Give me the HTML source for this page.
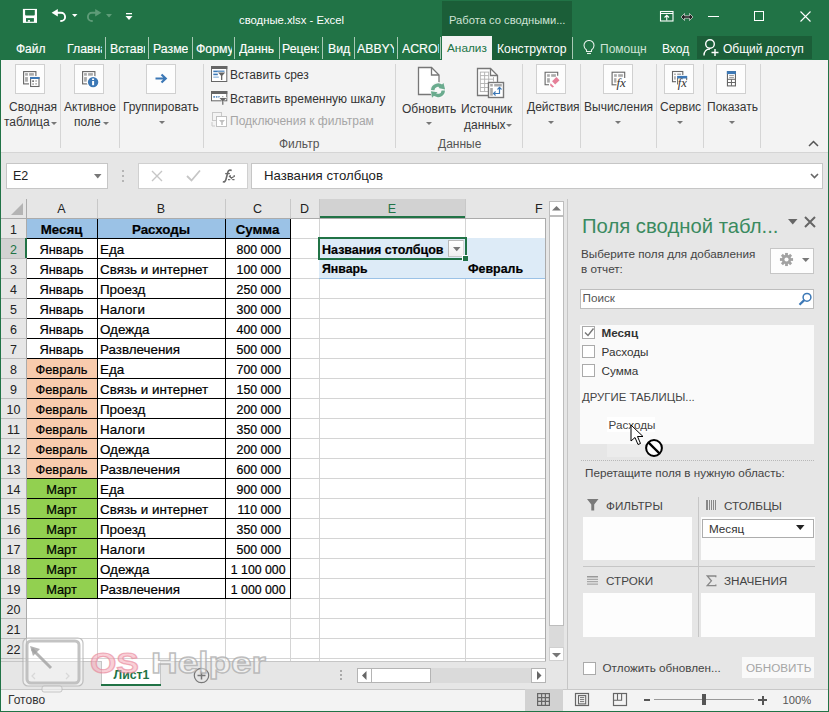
<!DOCTYPE html>
<html><head><meta charset="utf-8">
<style>
*{margin:0;padding:0;box-sizing:border-box}
html,body{width:829px;height:712px;overflow:hidden;background:#e6e6e6;font-family:"Liberation Sans",sans-serif;position:relative}
.a{position:absolute}
.t{position:absolute;white-space:nowrap;line-height:1}
#title{left:0;top:0;width:829px;height:60px;background:#217346}
#ribbon{left:0;top:60px;width:829px;height:93px;background:#f3f3f3;border-bottom:1px solid #d5d5d5}
#fbar{left:0;top:153px;width:829px;height:47px;background:#e6e6e6}
#pane{left:567px;top:199px;width:261px;height:490px;background:#e6e6e6;border-left:1px solid #c6c6c6}
#tabs{left:1px;top:661px;width:566px;height:28px;background:#e6e6e6}
#status{left:0;top:689px;width:829px;height:23px;background:#f3f3f3}
.sep{position:absolute;width:1px;background:#d5d5d5}
.bx{position:absolute;width:30px;height:30px;background:#fdfdfd;border:1px solid #d0d0d0}
.rt{position:absolute;white-space:nowrap;line-height:1;font-size:12px;color:#363636}
.dd{position:absolute;width:0;height:0;border-left:3px solid transparent;border-right:3px solid transparent;border-top:3px solid #777}
</style></head><body>
<div id="title" class="a"></div>
<div id="ribbon" class="a"></div>
<div id="fbar" class="a"></div>
<div id="pane" class="a"></div>
<div id="tabs" class="a"></div>
<div id="status" class="a"></div>
<!-- TITLE BAR -->
<div class="a" style="left:442px;top:1px;width:130px;height:59px;background:#1b5e38"></div>
<svg class="a" style="left:22px;top:8px" width="16" height="16" viewBox="0 0 16 16"><rect x="0.9" y="0.9" width="14.1" height="14" fill="#fff"/><path d="M3.1 2.1h9.7v4.5a1 1 0 0 1-1 1H4.1a1 1 0 0 1-1-1z" fill="#217346"/><rect x="4" y="10.1" width="7.9" height="3.6" fill="#217346"/><rect x="5.9" y="12.1" width="2.1" height="1.6" fill="#fff"/></svg>
<svg class="a" style="left:50px;top:7px" width="18" height="17" viewBox="0 0 18 17"><path d="M1.6 5.8L7.8 2.1v7.4z" fill="#fff"/><path d="M6 5.8H11a4.1 4.1 0 0 1 0 8.2H10.3" fill="none" stroke="#fff" stroke-width="1.9"/></svg>
<svg class="a" style="left:72px;top:14px" width="6" height="4"><path d="M0 0h5.5l-2.75 3z" fill="#fff"/></svg>
<svg class="a" style="left:85px;top:7px" width="18" height="17" viewBox="0 0 18 17"><path d="M16.4 5.8L10.2 2.1v7.4z" fill="#5e9c78"/><path d="M12 5.8H7a4.1 4.1 0 0 0 0 8.2H7.7" fill="none" stroke="#5e9c78" stroke-width="1.9"/></svg>
<svg class="a" style="left:106px;top:14px" width="6" height="4"><path d="M0 0h6l-3 3.5z" fill="#5e9c78"/></svg>
<svg class="a" style="left:125px;top:13px" width="8" height="8"><rect x="1" y="0" width="6" height="1.3" fill="#fff"/><path d="M0.5 3h7l-3.5 4z" fill="#fff"/></svg>
<div class="t" style="left:239px;top:14.5px;font-size:11.3px;color:#fff">сводные.xlsx - Excel</div>
<div class="t" style="left:449px;top:15px;font-size:11.2px;color:#cfe3d6">Работа со сводными...</div>
<svg class="a" style="left:659px;top:10px" width="15" height="12" viewBox="0 0 15 12"><rect x="1.5" y="1.5" width="12.5" height="9.5" fill="none" stroke="#fff" stroke-width="1.1"/><line x1="1.5" y1="3.5" x2="14" y2="3.5" stroke="#fff" stroke-width="1"/><path d="M7.75 10.5V5.5M5.5 7.5l2.25-2.2 2.25 2.2" fill="none" stroke="#fff" stroke-width="1.1"/></svg>
<svg class="a" style="left:680px;top:12px" width="14" height="10" viewBox="0 0 14 10"><path d="M1 5l3.5-3.5v2.3h5V1.5L13 5l-3.5 3.5V6.2h-5v2.3z" fill="#222" stroke="#fff" stroke-width="0.6"/></svg>
<div class="a" style="left:708px;top:16px;width:11px;height:1px;background:#fff"></div>
<div class="a" style="left:754px;top:11px;width:10px;height:10px;border:1px solid #fff"></div>
<svg class="a" style="left:800px;top:11px" width="11" height="11" viewBox="0 0 11 11"><path d="M0.5 0.5l10 10M10.5 0.5l-10 10" stroke="#fff" stroke-width="1.1"/></svg>
<!-- TABS ROW -->
<div class="t" style="left:16px;top:43px;font-size:12px;color:#fff;-webkit-text-stroke:0.15px #fff">Файл</div>
<div class="a" style="left:0;top:37px;width:442px;height:23px;overflow:hidden">
<div class="a" style="left:67px;top:6px;width:35px;height:14px;overflow:hidden"><div class="t" style="left:0;top:0;font-size:12.3px;color:#fff;-webkit-text-stroke:0.15px #fff">Главная</div></div>
<div class="a" style="left:105px;top:-1px;width:1px;height:23px;background:#a8c9b5"></div>
<div class="a" style="left:110px;top:6px;width:35px;height:14px;overflow:hidden"><div class="t" style="left:0;top:0;font-size:12.3px;color:#fff;-webkit-text-stroke:0.15px #fff">Вставка</div></div>
<div class="a" style="left:148px;top:-1px;width:1px;height:23px;background:#a8c9b5"></div>
<div class="a" style="left:153px;top:6px;width:35px;height:14px;overflow:hidden"><div class="t" style="left:0;top:0;font-size:12.3px;color:#fff;-webkit-text-stroke:0.15px #fff">Разметка</div></div>
<div class="a" style="left:192px;top:-1px;width:1px;height:23px;background:#a8c9b5"></div>
<div class="a" style="left:196px;top:6px;width:36px;height:14px;overflow:hidden"><div class="t" style="left:0;top:0;font-size:12.3px;color:#fff;-webkit-text-stroke:0.15px #fff">Формулы</div></div>
<div class="a" style="left:234px;top:-1px;width:1px;height:23px;background:#a8c9b5"></div>
<div class="a" style="left:239px;top:6px;width:35px;height:14px;overflow:hidden"><div class="t" style="left:0;top:0;font-size:12.3px;color:#fff;-webkit-text-stroke:0.15px #fff">Данные</div></div>
<div class="a" style="left:279px;top:-1px;width:1px;height:23px;background:#a8c9b5"></div>
<div class="a" style="left:282px;top:6px;width:37px;height:14px;overflow:hidden"><div class="t" style="left:0;top:0;font-size:12.3px;color:#fff;-webkit-text-stroke:0.15px #fff">Рецензирование</div></div>
<div class="a" style="left:322px;top:-1px;width:1px;height:23px;background:#a8c9b5"></div>
<div class="t" style="left:328px;top:6px;font-size:12.3px;color:#fff;-webkit-text-stroke:0.15px #fff">Вид</div>
<div class="a" style="left:354px;top:-1px;width:1px;height:23px;background:#a8c9b5"></div>
<div class="a" style="left:357px;top:6px;width:37px;height:14px;overflow:hidden"><div class="t" style="left:0;top:0;font-size:12.3px;color:#fff;-webkit-text-stroke:0.15px #fff">ABBYY FineReader</div></div>
<div class="a" style="left:397px;top:-1px;width:1px;height:23px;background:#a8c9b5"></div>
<div class="a" style="left:402px;top:6px;width:37px;height:14px;overflow:hidden"><div class="t" style="left:0;top:0;font-size:12.3px;color:#fff;-webkit-text-stroke:0.15px #fff">ACROBAT</div></div>
<div class="a" style="left:440px;top:-1px;width:1px;height:23px;background:#a8c9b5"></div>
</div>
<div class="a" style="left:442px;top:36px;width:50px;height:24px;background:#f3f3f3"></div>
<div class="t" style="left:447px;top:43px;font-size:11.8px;color:#217346">Анализ</div>
<div class="t" style="left:497px;top:43px;font-size:12.2px;color:#fff">Конструктор</div>
<div class="a" style="left:572px;top:37px;width:1px;height:22px;background:#a8c9b5"></div>
<svg class="a" style="left:583px;top:40px" width="12" height="16" viewBox="0 0 12 16"><path d="M3.5 11.5V10C1.5 8.5 1 7 1 5.5a5 5 0 0 1 10 0c0 1.5-.5 3-2.5 4.5v1.5z" fill="none" stroke="#e6f0ea" stroke-width="1.1"/><path d="M4 13.5h4" stroke="#e6f0ea" stroke-width="1.1"/></svg>
<div class="a" style="left:600px;top:43px;width:47px;height:14px;overflow:hidden"><div class="t" style="left:0;top:0;font-size:12px;color:#cfe3d6">Помощник</div></div>
<div class="t" style="left:662px;top:43px;font-size:12px;color:#fff">Вход</div>
<div class="a" style="left:697px;top:36px;width:115px;height:23px;background:#1b5e38"></div>
<svg class="a" style="left:703px;top:38px" width="17" height="19" viewBox="0 0 17 19"><circle cx="7" cy="6" r="4.3" fill="none" stroke="#fff" stroke-width="1.4"/><path d="M1 17.5c0-4 2.5-6.5 6-6.5" fill="none" stroke="#fff" stroke-width="1.4"/><path d="M12 11v7M8.5 14.5h7" stroke="#fff" stroke-width="1.4"/></svg>
<div class="t" style="left:723px;top:43px;font-size:12px;color:#fff">Общий доступ</div>
<!-- RIBBON -->
<div class="sep" style="left:60px;top:64px;height:84px"></div>
<div class="sep" style="left:119px;top:64px;height:84px"></div>
<div class="sep" style="left:203px;top:64px;height:84px"></div>
<div class="sep" style="left:395px;top:64px;height:84px"></div>
<div class="sep" style="left:522px;top:64px;height:84px"></div>
<div class="sep" style="left:580px;top:64px;height:84px"></div>
<div class="sep" style="left:656px;top:64px;height:84px"></div>
<div class="sep" style="left:703px;top:64px;height:84px"></div>
<div class="sep" style="left:760px;top:64px;height:84px"></div>
<!-- Сводная таблица -->
<div class="bx" style="left:15px;top:64px"></div>
<svg class="a" style="left:18px;top:66px" width="26" height="26" viewBox="0 0 26 26"><rect x="5.6" y="5.6" width="12.3" height="12.3" fill="none" stroke="#666" stroke-width="1.1"/><rect x="7.1" y="7.1" width="2.8" height="2.6" fill="#aaa"/><rect x="11.1" y="7.1" width="4.8" height="2.6" fill="#aaa"/><rect x="7.1" y="11.1" width="2.8" height="4.6" fill="#aaa"/><rect x="11" y="10" width="11" height="12" fill="#fff"/><rect x="12.6" y="11.5" width="8.4" height="9" fill="#fff" stroke="#666" stroke-width="1.1"/><rect x="12" y="11" width="9.5" height="2" fill="#3c78b6"/><rect x="14.2" y="14.3" width="1.8" height="1.7" fill="#777"/><rect x="17.2" y="14.6" width="1.8" height="0.8" fill="#777"/><rect x="14.2" y="17.2" width="1.8" height="1.8" fill="#bbb"/><rect x="17.2" y="17.5" width="1.8" height="0.8" fill="#777"/></svg>
<div class="rt" style="left:9px;top:101px">Сводная</div>
<div class="rt" style="left:4px;top:116px">таблица</div>
<div class="dd" style="left:51px;top:122px"></div>
<!-- Активное поле -->
<div class="bx" style="left:74px;top:64px"></div>
<svg class="a" style="left:77px;top:66px" width="26" height="26" viewBox="0 0 26 26"><rect x="5.6" y="5.6" width="12.3" height="12.3" fill="none" stroke="#666" stroke-width="1.1"/><rect x="7.1" y="7.1" width="2.8" height="2.6" fill="#aaa"/><rect x="11.1" y="7.1" width="4.8" height="2.6" fill="#aaa"/><rect x="7.1" y="11.1" width="2.8" height="4.6" fill="#aaa"/><circle cx="16.1" cy="16.1" r="6.4" fill="#fff"/><circle cx="16.1" cy="16.1" r="5.2" fill="#3c78b6"/><rect x="15.1" y="12.5" width="2" height="1.5" fill="#fff"/><rect x="15.1" y="15" width="2" height="4.2" fill="#fff"/></svg>
<div class="rt" style="left:64px;top:101px">Активное</div>
<div class="rt" style="left:74px;top:116px">поле</div>
<div class="dd" style="left:103px;top:122px"></div>
<!-- Группировать -->
<div class="bx" style="left:146px;top:64px"></div>
<svg class="a" style="left:155px;top:73px" width="13" height="11" viewBox="0 0 13 11"><path d="M0.5 5.5h10M6.5 1.5l4.2 4-4.2 4" fill="none" stroke="#3c78b6" stroke-width="2.2"/></svg>
<div class="rt" style="left:123px;top:101px">Группировать</div>
<div class="dd" style="left:159px;top:121px"></div>
<!-- Фильтр -->
<svg class="a" style="left:211px;top:66px" width="17" height="16" viewBox="0 0 17 16"><rect x="0.5" y="0.5" width="15.3" height="15" fill="#fff" stroke="#666"/><rect x="0" y="0" width="16.3" height="3" fill="#666"/><rect x="2.3" y="4.6" width="11.2" height="1.6" fill="#3c78b6"/><rect x="2.3" y="7.6" width="4.5" height="1.6" fill="#3c78b6"/><rect x="2.3" y="10.4" width="5.5" height="1.6" fill="#a9c6e2"/><path d="M6.2 5.8H15L11.9 9.4V14.5H9.3V9.4z" fill="#fff"/><path d="M7 6.6H14.2L11.3 9.8V14H10V9.8z" fill="#666"/></svg>
<div class="rt" style="left:230px;top:69px;color:#333">Вставить срез</div>
<svg class="a" style="left:211px;top:91px" width="17" height="15" viewBox="0 0 17 15"><rect x="0.5" y="0.5" width="15.3" height="9.3" fill="#fff" stroke="#666"/><rect x="0" y="0" width="16.3" height="3" fill="#666"/><rect x="2.3" y="5.2" width="1.8" height="1.4" fill="#3c78b6"/><rect x="5" y="5.2" width="1.4" height="1.4" fill="#3c78b6"/><rect x="7.3" y="5.2" width="1.4" height="1.4" fill="#3c78b6"/><rect x="11" y="5.2" width="1.4" height="1.4" fill="#999"/><path d="M7.6 6.2H16.3L12.9 9.6V14.3H10.7V9.6z" fill="#f3f3f3"/><path d="M8.5 7H15.5L12.4 10V13.7H11.2V10z" fill="#666"/></svg>
<div class="rt" style="left:230px;top:92.5px;color:#333">Вставить временную шкалу</div>
<svg class="a" style="left:211px;top:112px" width="17" height="16" viewBox="0 0 17 16"><rect x="1.5" y="0.5" width="9" height="8" fill="none" stroke="#c8c8c8"/><rect x="5.5" y="4.5" width="10" height="10" fill="#fff" stroke="#c0c0c0"/><path d="M8 8h6l-2.2 2.5v2.5h-1.6v-2.5z" fill="#c0c0c0"/><path d="M1 10v4h3" fill="none" stroke="#c8c8c8"/></svg>
<div class="rt" style="left:230px;top:115px;color:#a6a6a6">Подключения к фильтрам</div>
<div class="rt" style="left:279px;top:138px;color:#555">Фильтр</div>
<!-- Данные -->
<svg class="a" style="left:417px;top:66px" width="30" height="32" viewBox="0 0 30 32"><path d="M1.5 1.5h13l7.5 7.5v19.5h-20.5z" fill="#fff" stroke="#777" stroke-width="1.3"/><path d="M14.5 1.5v7.5h7.5" fill="none" stroke="#777" stroke-width="1.3"/><circle cx="21" cy="24.3" r="8.3" fill="#f7f7f7"/><path d="M15.7 24.1A5.3 5.3 0 0 1 25.3 21.3" fill="none" stroke="#6aab8e" stroke-width="3.4"/><path d="M26.5 17l1.6 6.6-6.6-1.5z" fill="#6aab8e"/><path d="M26.3 24.5A5.3 5.3 0 0 1 16.7 27.3" fill="none" stroke="#6aab8e" stroke-width="3.4"/><path d="M14 25.3l6.5 1-5.5 5.4z" fill="#6aab8e"/></svg>
<svg class="a" style="left:476px;top:67px" width="30" height="32" viewBox="0 0 30 32"><path d="M1.5 1.5h13l7 7v20h-20z" fill="#fff" stroke="#777" stroke-width="1.3"/><path d="M14.5 1.5v7h7" fill="none" stroke="#777" stroke-width="1.3"/><g fill="none" stroke="#b0b0b0" stroke-width="0.9"><rect x="4.3" y="5.1" width="8.4" height="19.5"/><path d="M8.6 5.1v19.5M4.3 8.6h8.4M4.3 12.2h13.4M4.3 16.5h8.4M4.3 20.5h8.4M17.5 10v4.5"/></g><rect x="12.5" y="15.5" width="15" height="15" fill="#fff" stroke="#777" stroke-width="1.4"/><rect x="14.2" y="17" width="2.6" height="2.5" fill="#aaa"/><rect x="18.2" y="17" width="7.6" height="2.5" fill="#aaa"/><rect x="14.2" y="21" width="2.6" height="7.7" fill="#aaa"/><path d="M17.8 26.5H23.5V20.8" fill="none" stroke="#3c78b6" stroke-width="1.2"/><path d="M19.6 24.5L17.5 26.5 19.6 28.5M21.5 22.5L23.5 20.4 25.5 22.5" fill="none" stroke="#3c78b6" stroke-width="1.1"/></svg>
<div class="rt" style="left:402px;top:103px">Обновить</div>
<div class="dd" style="left:426px;top:122px"></div>
<div class="rt" style="left:461px;top:103px">Источник</div>
<div class="rt" style="left:464px;top:119px">данных</div>
<div class="dd" style="left:506px;top:124px"></div>
<div class="rt" style="left:438px;top:138px;color:#555">Данные</div>
<!-- Действия -->
<div class="bx" style="left:536px;top:64px"></div>
<svg class="a" style="left:538px;top:66px" width="26" height="26" viewBox="0 0 26 26"><path d="M19.7 9.7V6.2H7.1V18.8H11" fill="none" stroke="#666" stroke-width="1.1"/><rect x="9.1" y="8.2" width="2.7" height="2.6" fill="#aaa"/><rect x="13.2" y="8.2" width="4.7" height="2.6" fill="#aaa"/><rect x="9.1" y="12.2" width="2.7" height="4.4" fill="#aaa"/><path d="M18.4 11.1L21.5 14.2 17.2 18.6 14.1 15.3z" fill="#e57f98"/><path d="M12.6 17.2L16.1 20.8 14.4 21.6 12 19.2z" fill="#e57f98"/></svg>
<div class="rt" style="left:527px;top:101px">Действия</div>
<div class="dd" style="left:548px;top:121px"></div>
<!-- Вычисления -->
<div class="bx" style="left:603px;top:64px"></div>
<svg class="a" style="left:605px;top:66px" width="26" height="26" viewBox="0 0 26 26"><rect x="7.1" y="6.2" width="12.6" height="12.6" fill="none" stroke="#666" stroke-width="1.1"/><rect x="9.1" y="8.2" width="2.7" height="2.6" fill="#aaa"/><rect x="13.2" y="8.2" width="4.7" height="2.6" fill="#aaa"/><rect x="9.1" y="12.2" width="2.7" height="4.4" fill="#aaa"/><rect x="11.5" y="12" width="12" height="11" fill="#fff"/><text x="11.5" y="20.5" font-family="Liberation Serif" font-style="italic" font-size="13" fill="#333">fx</text></svg>
<div class="rt" style="left:584px;top:101px">Вычисления</div>
<div class="dd" style="left:615px;top:121px"></div>
<!-- Сервис -->
<div class="bx" style="left:664px;top:64px"></div>
<svg class="a" style="left:666px;top:66px" width="26" height="26" viewBox="0 0 26 26"><rect x="6.5" y="5.5" width="10.3" height="10.2" fill="none" stroke="#666" stroke-width="1.1"/><rect x="8.1" y="7.5" width="1.7" height="1.5" fill="#aaa"/><rect x="11.2" y="7.5" width="3.9" height="1.5" fill="#aaa"/><rect x="8.1" y="10.2" width="1.7" height="3.4" fill="#aaa"/><rect x="10" y="9" width="12.5" height="13.5" fill="#fff"/><rect x="11.1" y="9.9" width="10.1" height="2.6" fill="#3c78b6"/><path d="M11.6 12v6.5M20.7 12v2.2" stroke="#666" stroke-width="1"/><text x="11.8" y="20.8" font-family="Liberation Serif" font-style="italic" font-size="12.5" fill="#333">fx</text></svg>
<div class="rt" style="left:660px;top:101px">Сервис</div>
<div class="dd" style="left:677px;top:121px"></div>
<!-- Показать -->
<div class="bx" style="left:716px;top:64px"></div>
<svg class="a" style="left:718px;top:66px" width="26" height="26" viewBox="0 0 26 26"><rect x="9.45" y="5.6" width="8" height="14.3" fill="#fff" stroke="#666" stroke-width="1.1"/><rect x="8.9" y="5.1" width="9" height="3" fill="#3c78b6"/><rect x="11.2" y="9.2" width="4.7" height="0.9" fill="#888"/><rect x="11.2" y="11.2" width="4.7" height="0.9" fill="#888"/><path d="M9.5 13.3h8M9.5 16.5h8M13.45 13.3v6.6" stroke="#666" stroke-width="1"/></svg>
<div class="rt" style="left:707px;top:101px">Показать</div>
<div class="dd" style="left:729px;top:121px"></div>
<svg class="a" style="left:808px;top:140px" width="11" height="7" viewBox="0 0 11 7"><path d="M1 6l4.5-4.5L10 6" fill="none" stroke="#555" stroke-width="1.5"/></svg>
<!-- FORMULA BAR -->
<div class="a" style="left:6px;top:163px;width:102px;height:26px;background:#fff;border:1px solid #c6c6c6"></div>
<div class="t" style="left:13px;top:170px;font-size:12.5px;color:#222">E2</div>
<svg class="a" style="left:94px;top:174px" width="8" height="5"><path d="M0 0h7.5L3.75 4.5z" fill="#777"/></svg>
<div class="a" style="left:122px;top:170px;width:2px;height:2px;background:#b5b5b5"></div>
<div class="a" style="left:122px;top:175px;width:2px;height:2px;background:#b5b5b5"></div>
<div class="a" style="left:122px;top:180px;width:2px;height:2px;background:#b5b5b5"></div>
<div class="a" style="left:138px;top:163px;width:110px;height:26px;background:#fff;border:1px solid #d0d0d0"></div>
<svg class="a" style="left:151px;top:170px" width="12" height="12" viewBox="0 0 12 12"><path d="M1 1l10 10M11 1L1 11" stroke="#c6c6c6" stroke-width="1.4"/></svg>
<svg class="a" style="left:186px;top:169px" width="15" height="13" viewBox="0 0 15 13"><path d="M1 7l4.5 4.5L14 1.5" fill="none" stroke="#c6c6c6" stroke-width="1.8"/></svg>
<svg class="a" style="left:221px;top:168px" width="16" height="16" viewBox="0 0 16 16"><path d="M1.8 13.6C3.3 14.3 4.5 13.4 5 11.3L6.9 4C7.5 2.2 8.8 1.7 10.7 2.5" fill="none" stroke="#6a6a6a" stroke-width="1.6"/><path d="M4.2 5.6H8.9" stroke="#6a6a6a" stroke-width="1.3"/><path d="M8 8l4.3 3.7M13.8 7.9L7.6 11.8M7 11.7h2M11.5 11.7h2M8.5 7.9h1.5M12.5 7.9h1.5" fill="none" stroke="#6a6a6a" stroke-width="1.2"/></svg>
<div class="a" style="left:251px;top:163px;width:572px;height:26px;background:#fff;border:1px solid #c6c6c6"></div>
<div class="t" style="left:264px;top:169px;font-size:13.2px;color:#222">Названия столбцов</div>
<svg class="a" style="left:810px;top:173px" width="9" height="6" viewBox="0 0 9 6"><path d="M1 1l3.5 3.5L8 1" fill="none" stroke="#666" stroke-width="1.6"/></svg>
<!-- GRID -->
<div class="a" style="left:1px;top:199px;width:566px;height:19px;background:#e6e6e6"></div>
<div class="a" style="left:26px;top:218px;width:519px;height:443px;background:#fff"></div>
<div class="a" style="left:1px;top:218px;width:25px;height:443px;background:#e6e6e6"></div>
<div class="a" style="left:1px;top:238px;width:25px;height:20px;background:#d2d2d2"></div>
<div class="a" style="left:319px;top:199px;width:146px;height:19px;background:#d2d2d2"></div>
<div class="a" style="left:319px;top:216px;width:146px;height:2px;background:#217346"></div>
<div class="a" style="left:97px;top:199px;width:1px;height:19px;background:#c8c8c8"></div>
<div class="a" style="left:225px;top:199px;width:1px;height:19px;background:#c8c8c8"></div>
<div class="a" style="left:290px;top:199px;width:1px;height:19px;background:#c8c8c8"></div>
<div class="a" style="left:319px;top:199px;width:1px;height:19px;background:#c8c8c8"></div>
<div class="a" style="left:465px;top:199px;width:1px;height:19px;background:#c8c8c8"></div>
<div class="a" style="left:26px;top:199px;width:1px;height:19px;background:#c8c8c8"></div>
<div class="a" style="left:1px;top:218px;width:545px;height:1px;background:#ababab"></div>
<div class="a" style="left:26px;top:199px;width:1px;height:462px;background:#ababab"></div>
<div class="a" style="left:545px;top:218px;width:1px;height:443px;background:#ababab"></div>
<div class="a" style="left:27px;top:238px;width:518px;height:1px;background:#d4d4d4"></div>
<div class="a" style="left:1px;top:238px;width:25px;height:1px;background:#bdbdbd"></div>
<div class="a" style="left:27px;top:258px;width:518px;height:1px;background:#d4d4d4"></div>
<div class="a" style="left:1px;top:258px;width:25px;height:1px;background:#bdbdbd"></div>
<div class="a" style="left:27px;top:278px;width:518px;height:1px;background:#d4d4d4"></div>
<div class="a" style="left:1px;top:278px;width:25px;height:1px;background:#bdbdbd"></div>
<div class="a" style="left:27px;top:298px;width:518px;height:1px;background:#d4d4d4"></div>
<div class="a" style="left:1px;top:298px;width:25px;height:1px;background:#bdbdbd"></div>
<div class="a" style="left:27px;top:318px;width:518px;height:1px;background:#d4d4d4"></div>
<div class="a" style="left:1px;top:318px;width:25px;height:1px;background:#bdbdbd"></div>
<div class="a" style="left:27px;top:338px;width:518px;height:1px;background:#d4d4d4"></div>
<div class="a" style="left:1px;top:338px;width:25px;height:1px;background:#bdbdbd"></div>
<div class="a" style="left:27px;top:358px;width:518px;height:1px;background:#d4d4d4"></div>
<div class="a" style="left:1px;top:358px;width:25px;height:1px;background:#bdbdbd"></div>
<div class="a" style="left:27px;top:378px;width:518px;height:1px;background:#d4d4d4"></div>
<div class="a" style="left:1px;top:378px;width:25px;height:1px;background:#bdbdbd"></div>
<div class="a" style="left:27px;top:398px;width:518px;height:1px;background:#d4d4d4"></div>
<div class="a" style="left:1px;top:398px;width:25px;height:1px;background:#bdbdbd"></div>
<div class="a" style="left:27px;top:418px;width:518px;height:1px;background:#d4d4d4"></div>
<div class="a" style="left:1px;top:418px;width:25px;height:1px;background:#bdbdbd"></div>
<div class="a" style="left:27px;top:438px;width:518px;height:1px;background:#d4d4d4"></div>
<div class="a" style="left:1px;top:438px;width:25px;height:1px;background:#bdbdbd"></div>
<div class="a" style="left:27px;top:458px;width:518px;height:1px;background:#d4d4d4"></div>
<div class="a" style="left:1px;top:458px;width:25px;height:1px;background:#bdbdbd"></div>
<div class="a" style="left:27px;top:478px;width:518px;height:1px;background:#d4d4d4"></div>
<div class="a" style="left:1px;top:478px;width:25px;height:1px;background:#bdbdbd"></div>
<div class="a" style="left:27px;top:498px;width:518px;height:1px;background:#d4d4d4"></div>
<div class="a" style="left:1px;top:498px;width:25px;height:1px;background:#bdbdbd"></div>
<div class="a" style="left:27px;top:518px;width:518px;height:1px;background:#d4d4d4"></div>
<div class="a" style="left:1px;top:518px;width:25px;height:1px;background:#bdbdbd"></div>
<div class="a" style="left:27px;top:538px;width:518px;height:1px;background:#d4d4d4"></div>
<div class="a" style="left:1px;top:538px;width:25px;height:1px;background:#bdbdbd"></div>
<div class="a" style="left:27px;top:558px;width:518px;height:1px;background:#d4d4d4"></div>
<div class="a" style="left:1px;top:558px;width:25px;height:1px;background:#bdbdbd"></div>
<div class="a" style="left:27px;top:578px;width:518px;height:1px;background:#d4d4d4"></div>
<div class="a" style="left:1px;top:578px;width:25px;height:1px;background:#bdbdbd"></div>
<div class="a" style="left:27px;top:598px;width:518px;height:1px;background:#d4d4d4"></div>
<div class="a" style="left:1px;top:598px;width:25px;height:1px;background:#bdbdbd"></div>
<div class="a" style="left:27px;top:618px;width:518px;height:1px;background:#d4d4d4"></div>
<div class="a" style="left:1px;top:618px;width:25px;height:1px;background:#bdbdbd"></div>
<div class="a" style="left:27px;top:638px;width:518px;height:1px;background:#d4d4d4"></div>
<div class="a" style="left:1px;top:638px;width:25px;height:1px;background:#bdbdbd"></div>
<div class="a" style="left:27px;top:658px;width:518px;height:1px;background:#d4d4d4"></div>
<div class="a" style="left:1px;top:658px;width:25px;height:1px;background:#bdbdbd"></div>
<div class="a" style="left:97px;top:219px;width:1px;height:442px;background:#d4d4d4"></div>
<div class="a" style="left:225px;top:219px;width:1px;height:442px;background:#d4d4d4"></div>
<div class="a" style="left:290px;top:219px;width:1px;height:442px;background:#d4d4d4"></div>
<div class="a" style="left:319px;top:219px;width:1px;height:442px;background:#d4d4d4"></div>
<div class="a" style="left:465px;top:219px;width:1px;height:442px;background:#d4d4d4"></div>
<div class="t" style="left:26px;width:71px;text-align:center;top:203px;font-size:12.5px;color:#222">A</div>
<div class="t" style="left:97px;width:128px;text-align:center;top:203px;font-size:12.5px;color:#222">B</div>
<div class="t" style="left:225px;width:65px;text-align:center;top:203px;font-size:12.5px;color:#222">C</div>
<div class="t" style="left:290px;width:29px;text-align:center;top:203px;font-size:12.5px;color:#222">D</div>
<div class="t" style="left:319px;width:146px;text-align:center;top:203px;font-size:12.5px;color:#217346">E</div>
<div class="t" style="left:535px;top:203px;font-size:12.5px;color:#222">F</div>
<div class="t" style="left:1px;width:25px;text-align:center;top:224px;font-size:12.5px;color:#222">1</div>
<div class="t" style="left:1px;width:25px;text-align:center;top:244px;font-size:12.5px;color:#217346">2</div>
<div class="t" style="left:1px;width:25px;text-align:center;top:264px;font-size:12.5px;color:#222">3</div>
<div class="t" style="left:1px;width:25px;text-align:center;top:284px;font-size:12.5px;color:#222">4</div>
<div class="t" style="left:1px;width:25px;text-align:center;top:304px;font-size:12.5px;color:#222">5</div>
<div class="t" style="left:1px;width:25px;text-align:center;top:324px;font-size:12.5px;color:#222">6</div>
<div class="t" style="left:1px;width:25px;text-align:center;top:344px;font-size:12.5px;color:#222">7</div>
<div class="t" style="left:1px;width:25px;text-align:center;top:364px;font-size:12.5px;color:#222">8</div>
<div class="t" style="left:1px;width:25px;text-align:center;top:384px;font-size:12.5px;color:#222">9</div>
<div class="t" style="left:1px;width:25px;text-align:center;top:404px;font-size:12.5px;color:#222">10</div>
<div class="t" style="left:1px;width:25px;text-align:center;top:424px;font-size:12.5px;color:#222">11</div>
<div class="t" style="left:1px;width:25px;text-align:center;top:444px;font-size:12.5px;color:#222">12</div>
<div class="t" style="left:1px;width:25px;text-align:center;top:464px;font-size:12.5px;color:#222">13</div>
<div class="t" style="left:1px;width:25px;text-align:center;top:484px;font-size:12.5px;color:#222">14</div>
<div class="t" style="left:1px;width:25px;text-align:center;top:504px;font-size:12.5px;color:#222">15</div>
<div class="t" style="left:1px;width:25px;text-align:center;top:524px;font-size:12.5px;color:#222">16</div>
<div class="t" style="left:1px;width:25px;text-align:center;top:544px;font-size:12.5px;color:#222">17</div>
<div class="t" style="left:1px;width:25px;text-align:center;top:564px;font-size:12.5px;color:#222">18</div>
<div class="t" style="left:1px;width:25px;text-align:center;top:584px;font-size:12.5px;color:#222">19</div>
<div class="t" style="left:1px;width:25px;text-align:center;top:604px;font-size:12.5px;color:#222">20</div>
<div class="t" style="left:1px;width:25px;text-align:center;top:624px;font-size:12.5px;color:#222">21</div>
<div class="t" style="left:1px;width:25px;text-align:center;top:644px;font-size:12.5px;color:#222">22</div>
<div class="a" style="left:25px;top:238px;width:2px;height:20px;background:#217346"></div>
<svg class="a" style="left:11px;top:203px" width="13" height="13"><path d="M12 0V12H0z" fill="#b4b4b4"/></svg>
<div class="a" style="left:26px;top:218px;width:264px;height:20px;background:#9bc2e6"></div>
<div class="a" style="left:26px;top:358px;width:71px;height:20px;background:#f8cbad"></div>
<div class="a" style="left:26px;top:478px;width:71px;height:20px;background:#92d050"></div>
<div class="a" style="left:26px;top:378px;width:71px;height:20px;background:#f8cbad"></div>
<div class="a" style="left:26px;top:498px;width:71px;height:20px;background:#92d050"></div>
<div class="a" style="left:26px;top:398px;width:71px;height:20px;background:#f8cbad"></div>
<div class="a" style="left:26px;top:518px;width:71px;height:20px;background:#92d050"></div>
<div class="a" style="left:26px;top:418px;width:71px;height:20px;background:#f8cbad"></div>
<div class="a" style="left:26px;top:538px;width:71px;height:20px;background:#92d050"></div>
<div class="a" style="left:26px;top:438px;width:71px;height:20px;background:#f8cbad"></div>
<div class="a" style="left:26px;top:558px;width:71px;height:20px;background:#92d050"></div>
<div class="a" style="left:26px;top:458px;width:71px;height:20px;background:#f8cbad"></div>
<div class="a" style="left:26px;top:578px;width:71px;height:20px;background:#92d050"></div>
<div class="a" style="left:319px;top:238px;width:226px;height:40px;background:#ddebf7"></div>
<div class="a" style="left:319px;top:278px;width:226px;height:1px;background:#9bc2e6"></div>
<div class="a" style="left:27px;top:238px;width:264px;height:1px;background:#000"></div>
<div class="a" style="left:27px;top:258px;width:264px;height:1px;background:#000"></div>
<div class="a" style="left:27px;top:278px;width:264px;height:1px;background:#000"></div>
<div class="a" style="left:27px;top:298px;width:264px;height:1px;background:#000"></div>
<div class="a" style="left:27px;top:318px;width:264px;height:1px;background:#000"></div>
<div class="a" style="left:27px;top:338px;width:264px;height:1px;background:#000"></div>
<div class="a" style="left:27px;top:358px;width:264px;height:1px;background:#000"></div>
<div class="a" style="left:27px;top:378px;width:264px;height:1px;background:#000"></div>
<div class="a" style="left:27px;top:398px;width:264px;height:1px;background:#000"></div>
<div class="a" style="left:27px;top:418px;width:264px;height:1px;background:#000"></div>
<div class="a" style="left:27px;top:438px;width:264px;height:1px;background:#000"></div>
<div class="a" style="left:27px;top:458px;width:264px;height:1px;background:#000"></div>
<div class="a" style="left:27px;top:478px;width:264px;height:1px;background:#000"></div>
<div class="a" style="left:27px;top:498px;width:264px;height:1px;background:#000"></div>
<div class="a" style="left:27px;top:518px;width:264px;height:1px;background:#000"></div>
<div class="a" style="left:27px;top:538px;width:264px;height:1px;background:#000"></div>
<div class="a" style="left:27px;top:558px;width:264px;height:1px;background:#000"></div>
<div class="a" style="left:27px;top:578px;width:264px;height:1px;background:#000"></div>
<div class="a" style="left:27px;top:598px;width:264px;height:1px;background:#000"></div>
<div class="a" style="left:26px;top:598px;width:265px;height:1px;background:#000"></div>
<div class="a" style="left:97px;top:218px;width:1px;height:380px;background:#000"></div>
<div class="a" style="left:225px;top:218px;width:1px;height:380px;background:#000"></div>
<div class="a" style="left:290px;top:218px;width:1px;height:380px;background:#000"></div>
<div class="a" style="left:26px;top:199px;width:1px;height:462px;background:#ababab"></div>
<div class="a" style="left:1px;top:218px;width:545px;height:1px;background:#ababab"></div>
<div class="a" style="left:25px;top:238px;width:2px;height:20px;background:#217346"></div>
<div class="t" style="left:26px;width:71px;text-align:center;top:222.54px;font-size:13.3px;font-weight:bold;color:#000;-webkit-text-stroke:0.2px #000">Месяц</div>
<div class="t" style="left:97px;width:128px;text-align:center;top:222.54px;font-size:13.3px;font-weight:bold;color:#000;-webkit-text-stroke:0.2px #000">Расходы</div>
<div class="t" style="left:225px;width:65px;text-align:center;top:222.54px;font-size:13.3px;font-weight:bold;color:#000;-webkit-text-stroke:0.2px #000">Сумма</div>
<div class="t" style="left:26px;width:71px;text-align:center;top:243.96px;font-size:12.8px;color:#000;-webkit-text-stroke:0.2px #000">Январь</div>
<div class="t" style="left:100px;top:243.46px;font-size:13.4px;color:#000;-webkit-text-stroke:0.2px #000">Еда</div>
<div class="t" style="left:225px;width:56px;text-align:right;top:244.39px;font-size:12.3px;color:#000;-webkit-text-stroke:0.2px #000">800 000</div>
<div class="t" style="left:26px;width:71px;text-align:center;top:263.96px;font-size:12.8px;color:#000;-webkit-text-stroke:0.2px #000">Январь</div>
<div class="t" style="left:100px;top:263.46px;font-size:13.4px;color:#000;-webkit-text-stroke:0.2px #000">Связь и интернет</div>
<div class="t" style="left:225px;width:56px;text-align:right;top:264.39px;font-size:12.3px;color:#000;-webkit-text-stroke:0.2px #000">100 000</div>
<div class="t" style="left:26px;width:71px;text-align:center;top:283.96px;font-size:12.8px;color:#000;-webkit-text-stroke:0.2px #000">Январь</div>
<div class="t" style="left:100px;top:283.46px;font-size:13.4px;color:#000;-webkit-text-stroke:0.2px #000">Проезд</div>
<div class="t" style="left:225px;width:56px;text-align:right;top:284.39px;font-size:12.3px;color:#000;-webkit-text-stroke:0.2px #000">250 000</div>
<div class="t" style="left:26px;width:71px;text-align:center;top:303.96px;font-size:12.8px;color:#000;-webkit-text-stroke:0.2px #000">Январь</div>
<div class="t" style="left:100px;top:303.46px;font-size:13.4px;color:#000;-webkit-text-stroke:0.2px #000">Налоги</div>
<div class="t" style="left:225px;width:56px;text-align:right;top:304.39px;font-size:12.3px;color:#000;-webkit-text-stroke:0.2px #000">300 000</div>
<div class="t" style="left:26px;width:71px;text-align:center;top:323.96px;font-size:12.8px;color:#000;-webkit-text-stroke:0.2px #000">Январь</div>
<div class="t" style="left:100px;top:323.46px;font-size:13.4px;color:#000;-webkit-text-stroke:0.2px #000">Одежда</div>
<div class="t" style="left:225px;width:56px;text-align:right;top:324.39px;font-size:12.3px;color:#000;-webkit-text-stroke:0.2px #000">400 000</div>
<div class="t" style="left:26px;width:71px;text-align:center;top:343.96px;font-size:12.8px;color:#000;-webkit-text-stroke:0.2px #000">Январь</div>
<div class="t" style="left:100px;top:343.46px;font-size:13.4px;color:#000;-webkit-text-stroke:0.2px #000">Развлечения</div>
<div class="t" style="left:225px;width:56px;text-align:right;top:344.39px;font-size:12.3px;color:#000;-webkit-text-stroke:0.2px #000">500 000</div>
<div class="t" style="left:26px;width:71px;text-align:center;top:363.96px;font-size:12.8px;color:#000;-webkit-text-stroke:0.2px #000">Февраль</div>
<div class="t" style="left:100px;top:363.46px;font-size:13.4px;color:#000;-webkit-text-stroke:0.2px #000">Еда</div>
<div class="t" style="left:225px;width:56px;text-align:right;top:364.39px;font-size:12.3px;color:#000;-webkit-text-stroke:0.2px #000">700 000</div>
<div class="t" style="left:26px;width:71px;text-align:center;top:383.96px;font-size:12.8px;color:#000;-webkit-text-stroke:0.2px #000">Февраль</div>
<div class="t" style="left:100px;top:383.46px;font-size:13.4px;color:#000;-webkit-text-stroke:0.2px #000">Связь и интернет</div>
<div class="t" style="left:225px;width:56px;text-align:right;top:384.39px;font-size:12.3px;color:#000;-webkit-text-stroke:0.2px #000">150 000</div>
<div class="t" style="left:26px;width:71px;text-align:center;top:403.96px;font-size:12.8px;color:#000;-webkit-text-stroke:0.2px #000">Февраль</div>
<div class="t" style="left:100px;top:403.46px;font-size:13.4px;color:#000;-webkit-text-stroke:0.2px #000">Проезд</div>
<div class="t" style="left:225px;width:56px;text-align:right;top:404.39px;font-size:12.3px;color:#000;-webkit-text-stroke:0.2px #000">200 000</div>
<div class="t" style="left:26px;width:71px;text-align:center;top:423.96px;font-size:12.8px;color:#000;-webkit-text-stroke:0.2px #000">Февраль</div>
<div class="t" style="left:100px;top:423.46px;font-size:13.4px;color:#000;-webkit-text-stroke:0.2px #000">Налоги</div>
<div class="t" style="left:225px;width:56px;text-align:right;top:424.39px;font-size:12.3px;color:#000;-webkit-text-stroke:0.2px #000">350 000</div>
<div class="t" style="left:26px;width:71px;text-align:center;top:443.96px;font-size:12.8px;color:#000;-webkit-text-stroke:0.2px #000">Февраль</div>
<div class="t" style="left:100px;top:443.46px;font-size:13.4px;color:#000;-webkit-text-stroke:0.2px #000">Одежда</div>
<div class="t" style="left:225px;width:56px;text-align:right;top:444.39px;font-size:12.3px;color:#000;-webkit-text-stroke:0.2px #000">200 000</div>
<div class="t" style="left:26px;width:71px;text-align:center;top:463.96px;font-size:12.8px;color:#000;-webkit-text-stroke:0.2px #000">Февраль</div>
<div class="t" style="left:100px;top:463.46px;font-size:13.4px;color:#000;-webkit-text-stroke:0.2px #000">Развлечения</div>
<div class="t" style="left:225px;width:56px;text-align:right;top:464.39px;font-size:12.3px;color:#000;-webkit-text-stroke:0.2px #000">600 000</div>
<div class="t" style="left:26px;width:71px;text-align:center;top:483.96px;font-size:12.8px;color:#000;-webkit-text-stroke:0.2px #000">Март</div>
<div class="t" style="left:100px;top:483.46px;font-size:13.4px;color:#000;-webkit-text-stroke:0.2px #000">Еда</div>
<div class="t" style="left:225px;width:56px;text-align:right;top:484.39px;font-size:12.3px;color:#000;-webkit-text-stroke:0.2px #000">900 000</div>
<div class="t" style="left:26px;width:71px;text-align:center;top:503.96px;font-size:12.8px;color:#000;-webkit-text-stroke:0.2px #000">Март</div>
<div class="t" style="left:100px;top:503.46px;font-size:13.4px;color:#000;-webkit-text-stroke:0.2px #000">Связь и интернет</div>
<div class="t" style="left:225px;width:56px;text-align:right;top:504.39px;font-size:12.3px;color:#000;-webkit-text-stroke:0.2px #000">110 000</div>
<div class="t" style="left:26px;width:71px;text-align:center;top:523.96px;font-size:12.8px;color:#000;-webkit-text-stroke:0.2px #000">Март</div>
<div class="t" style="left:100px;top:523.46px;font-size:13.4px;color:#000;-webkit-text-stroke:0.2px #000">Проезд</div>
<div class="t" style="left:225px;width:56px;text-align:right;top:524.39px;font-size:12.3px;color:#000;-webkit-text-stroke:0.2px #000">350 000</div>
<div class="t" style="left:26px;width:71px;text-align:center;top:543.96px;font-size:12.8px;color:#000;-webkit-text-stroke:0.2px #000">Март</div>
<div class="t" style="left:100px;top:543.46px;font-size:13.4px;color:#000;-webkit-text-stroke:0.2px #000">Налоги</div>
<div class="t" style="left:225px;width:56px;text-align:right;top:544.39px;font-size:12.3px;color:#000;-webkit-text-stroke:0.2px #000">500 000</div>
<div class="t" style="left:26px;width:71px;text-align:center;top:563.96px;font-size:12.8px;color:#000;-webkit-text-stroke:0.2px #000">Март</div>
<div class="t" style="left:100px;top:563.46px;font-size:13.4px;color:#000;-webkit-text-stroke:0.2px #000">Одежда</div>
<div class="t" style="left:225px;width:60.5px;text-align:right;top:564.39px;font-size:12.3px;color:#000;-webkit-text-stroke:0.2px #000">1 100 000</div>
<div class="t" style="left:26px;width:71px;text-align:center;top:583.96px;font-size:12.8px;color:#000;-webkit-text-stroke:0.2px #000">Март</div>
<div class="t" style="left:100px;top:583.46px;font-size:13.4px;color:#000;-webkit-text-stroke:0.2px #000">Развлечения</div>
<div class="t" style="left:225px;width:60.5px;text-align:right;top:584.39px;font-size:12.3px;color:#000;-webkit-text-stroke:0.2px #000">1 000 000</div>
<div class="t" style="left:322px;top:244.22px;font-size:12.5px;font-weight:bold;color:#000;-webkit-text-stroke:0.2px #000">Названия столбцов</div>
<div class="t" style="left:322px;top:263.39px;font-size:12.3px;font-weight:bold;color:#000;-webkit-text-stroke:0.2px #000">Январь</div>
<div class="t" style="left:468px;top:263.3px;font-size:12.4px;font-weight:bold;color:#000;-webkit-text-stroke:0.2px #000">Февраль</div>
<div class="a" style="left:448px;top:240px;width:16px;height:17px;background:linear-gradient(#fff,#f0f0f0);border:1px solid #b8b8b8;border-right-color:#d8d8d8;border-bottom-color:#c8c8c8"></div>
<svg class="a" style="left:453px;top:247px" width="8" height="5"><path d="M0 0h7.5l-3.75 4.2z" fill="#777"/></svg>
<div class="a" style="left:318px;top:237px;width:149px;height:23px;border:2px solid #217346"></div>
<div class="a" style="left:462px;top:255px;width:6px;height:6px;background:#217346;border:1px solid #fff;border-right:0;border-bottom:0"></div>
<div class="a" style="left:545px;top:199px;width:22px;height:462px;background:#e6e6e6"></div>
<div class="a" style="left:545px;top:218px;width:1px;height:443px;background:#ababab"></div>
<div class="a" style="left:549px;top:201px;width:15px;height:15px;background:#fff;border:1px solid #bdbdbd"></div>
<svg class="a" style="left:552px;top:206px" width="9" height="5"><path d="M0 4.5L4.5 0 9 4.5z" fill="#777"/></svg>
<div class="a" style="left:549px;top:216px;width:15px;height:431px;background:#dadada"></div>
<div class="a" style="left:549px;top:215px;width:15px;height:411px;background:#fff;border:1px solid #bdbdbd;border-top-width:2px"></div>
<div class="a" style="left:549px;top:647px;width:15px;height:14px;background:#fff;border:1px solid #d0d0d0"></div>
<svg class="a" style="left:552px;top:652.5px" width="9" height="5"><path d="M0 0h9L4.5 4.5z" fill="#777"/></svg>
<!-- PANE -->
<div class="t" style="left:582px;top:216px;font-size:20.3px;color:#3a8a60">Поля сводной табл...</div>
<svg class="a" style="left:788px;top:219px" width="10" height="6"><path d="M0 0h9.5L4.75 5.5z" fill="#666"/></svg>
<svg class="a" style="left:804px;top:216px" width="12" height="12" viewBox="0 0 12 12"><path d="M1 1l10 10M11 1L1 11" stroke="#666" stroke-width="2"/></svg>
<div class="t" style="left:581px;top:247.5px;font-size:11.7px;color:#444">Выберите поля для добавления</div>
<div class="t" style="left:581px;top:262.8px;font-size:11.7px;color:#444">в отчет:</div>
<div class="a" style="left:770px;top:248px;width:44px;height:26px;background:#fdfdfd;border:1px solid #c6c6c6"></div>
<svg class="a" style="left:779px;top:252px" width="15" height="15" viewBox="0 0 16 16"><g fill="#a2a2a2"><circle cx="8" cy="8" r="5"/><rect x="6.5" y="1" width="3" height="14"/><rect x="1" y="6.5" width="14" height="3"/><rect x="6.5" y="1" width="3" height="14" transform="rotate(45 8 8)"/><rect x="6.5" y="1" width="3" height="14" transform="rotate(-45 8 8)"/></g><circle cx="8" cy="8" r="2.2" fill="#fdfdfd"/></svg>
<svg class="a" style="left:802px;top:258px" width="8" height="5"><path d="M0 0h7.5L3.75 4z" fill="#777"/></svg>
<div class="a" style="left:580px;top:289px;width:234px;height:20px;background:#fff;border:1px solid #bdbdbd"></div>
<div class="t" style="left:582.5px;top:292px;font-size:11.7px;color:#555">Поиск</div>
<svg class="a" style="left:797px;top:291px" width="16" height="16" viewBox="0 0 16 16"><circle cx="10" cy="6.3" r="3.9" fill="none" stroke="#3c78b6" stroke-width="1.5"/><path d="M7.2 9.1L2.5 13.8" stroke="#3c78b6" stroke-width="2.2"/></svg>
<div class="a" style="left:580px;top:325px;width:234px;height:119px;background:#fafafa"></div>
<div class="a" style="left:582px;top:326px;width:13px;height:13px;background:#fff;border:1px solid #aaa"></div>
<svg class="a" style="left:583px;top:327px" width="12" height="11" viewBox="0 0 12 11"><path d="M2 5.5l3 3 5.5-7" fill="none" stroke="#777" stroke-width="1.4"/></svg>
<div class="t" style="left:601.5px;top:326.8px;font-size:11.7px;font-weight:bold;color:#333">Месяц</div>
<div class="a" style="left:582px;top:345px;width:13px;height:13px;background:#fff;border:1px solid #aaa"></div>
<div class="t" style="left:601.5px;top:345.7px;font-size:11.7px;color:#333">Расходы</div>
<div class="a" style="left:582px;top:364px;width:13px;height:13px;background:#fff;border:1px solid #aaa"></div>
<div class="t" style="left:601.5px;top:364.5px;font-size:11.7px;color:#333">Сумма</div>
<div class="t" style="left:582px;top:392px;font-size:11.4px;color:#444">ДРУГИЕ ТАБЛИЦЫ...</div>
<div class="a" style="left:607px;top:417px;width:48px;height:15px;background:#fff"></div><div class="a" style="left:607px;top:444px;width:48px;height:13px;background:rgba(255,255,255,0.25)"></div>
<div class="t" style="left:608.5px;top:419px;font-size:11.7px;color:#444">Расходы</div>
<svg class="a" style="left:630px;top:424px" width="14" height="23" viewBox="0 0 14 23"><path d="M1 1v16l4-3.5 3 7 2.5-1-3-7h5.5z" fill="#fff" stroke="#000" stroke-width="1"/></svg>
<svg class="a" style="left:644px;top:438px" width="20" height="20" viewBox="0 0 20 20"><circle cx="10" cy="10" r="7.9" fill="#fff" stroke="#000" stroke-width="2"/><path d="M4.6 4.6l10.8 10.8" stroke="#000" stroke-width="2.2"/></svg>
<div class="a" style="left:581px;top:460px;width:233px;height:0;border-top:1px dotted #b8b8b8"></div>
<div class="t" style="left:585px;top:466.5px;font-size:11.7px;color:#444">Перетащите поля в нужную область:</div>
<!-- areas -->
<div class="a" style="left:698px;top:497px;width:1px;height:140px;background:#c6c6c6"></div>
<div class="a" style="left:583px;top:566px;width:232px;height:1px;background:#c6c6c6"></div>
<div class="a" style="left:583px;top:517px;width:109px;height:43px;background:#fdfdfd"></div>
<div class="a" style="left:701px;top:517px;width:114px;height:43px;background:#fdfdfd"></div>
<div class="a" style="left:583px;top:593px;width:109px;height:44px;background:#fdfdfd"></div>
<div class="a" style="left:701px;top:593px;width:114px;height:44px;background:#fdfdfd"></div>
<svg class="a" style="left:587px;top:499px" width="12" height="12" viewBox="0 0 12 12"><path d="M0 0h11.5L7.2 5.5V11.5H4.3V5.5z" fill="#7a7a7a"/></svg>
<div class="t" style="left:606px;top:499.5px;font-size:11.7px;color:#444">ФИЛЬТРЫ</div>
<svg class="a" style="left:706px;top:500px" width="10" height="11" viewBox="0 0 10 11"><g fill="#888"><rect x="0" y="0" width="2" height="10"/><rect x="3" y="0" width="1" height="10"/><rect x="5" y="0" width="1" height="10"/><rect x="7" y="0" width="1" height="10"/><rect x="9" y="0" width="1" height="10"/></g></svg>
<div class="t" style="left:724px;top:499.5px;font-size:11.7px;color:#444">СТОЛБЦЫ</div>
<svg class="a" style="left:587px;top:576px" width="12" height="10" viewBox="0 0 12 10"><g fill="#999"><rect x="0" y="0" width="11" height="1.5"/><rect x="0" y="2.8" width="11" height="1"/><rect x="0" y="5.2" width="11" height="1"/><rect x="0" y="7.6" width="11" height="1"/></g></svg>
<div class="t" style="left:606px;top:575.3px;font-size:11.7px;color:#444">СТРОКИ</div>
<svg class="a" style="left:706px;top:575px" width="11" height="12" viewBox="0 0 11 12"><path d="M9.8 2.2V1H1.3l4.1 4.8-4.1 4.8H9.8V9.4" fill="none" stroke="#888" stroke-width="1.3"/></svg>
<div class="t" style="left:724px;top:575.3px;font-size:11.7px;color:#444">ЗНАЧЕНИЯ</div>
<div class="a" style="left:702px;top:519px;width:112px;height:19px;background:#fff;border:1px solid #adadad"></div>
<div class="t" style="left:709px;top:522.5px;font-size:11.7px;color:#333">Месяц</div>
<svg class="a" style="left:796px;top:525px" width="9" height="6"><path d="M0 0h8.5L4.25 5z" fill="#222"/></svg>
<div class="a" style="left:583px;top:662px;width:13px;height:13px;background:#fff;border:1px solid #aaa"></div>
<div class="t" style="left:602.5px;top:662px;font-size:11.7px;color:#444">Отложить обновлен...</div>
<div class="a" style="left:742px;top:657px;width:72px;height:21px;background:#f9f9f9"></div>
<div class="t" style="left:746px;top:662px;font-size:11.7px;color:#a6a6a6">ОБНОВИТЬ</div>
<!-- SHEET TABS -->
<div class="a" style="left:1px;top:661px;width:545px;height:1px;background:#c6c6c6"></div>
<div class="a" style="left:1px;top:689px;width:827px;height:1px;background:#c8c8c8"></div>
<div class="a" style="left:101px;top:661px;width:60px;height:25px;background:#fff;border-left:1px solid #c6c6c6;border-right:1px solid #c6c6c6"></div>
<div class="a" style="left:101px;top:684px;width:60px;height:2px;background:#217346"></div>
<div class="t" style="left:113.5px;top:668.5px;font-size:12.3px;font-weight:bold;color:#217346">Лист1</div>
<svg class="a" style="left:193px;top:667px" width="17" height="17" viewBox="0 0 17 17"><circle cx="8.5" cy="8.5" r="7.2" fill="none" stroke="#777" stroke-width="1.2"/><path d="M8.5 4.5v8M4.5 8.5h8" stroke="#777" stroke-width="1.5"/></svg>
<div class="a" style="left:340px;top:670px;width:2px;height:2px;background:#aaa"></div>
<div class="a" style="left:340px;top:674px;width:2px;height:2px;background:#aaa"></div>
<div class="a" style="left:340px;top:678px;width:2px;height:2px;background:#aaa"></div>
<div class="a" style="left:357px;top:668px;width:189px;height:15px;background:#dadada"></div>
<div class="a" style="left:357px;top:668px;width:15px;height:15px;background:#fff;border:1px solid #b4b4b4"></div>
<svg class="a" style="left:362px;top:671px" width="5" height="9"><path d="M4.5 0v9L0 4.5z" fill="#666"/></svg>
<div class="a" style="left:371px;top:668px;width:60px;height:15px;background:#fff;border:1px solid #b4b4b4"></div>
<div class="a" style="left:531px;top:668px;width:15px;height:15px;background:#fff;border:1px solid #b4b4b4"></div>
<svg class="a" style="left:537px;top:671px" width="5" height="9"><path d="M0 0v9L4.5 4.5z" fill="#666"/></svg>
<!-- STATUS BAR -->
<div class="t" style="left:8px;top:694px;font-size:12px;color:#333">Готово</div>
<div class="a" style="left:525px;top:689px;width:38px;height:22px;background:#d2d2d2"></div>
<svg class="a" style="left:537px;top:693px" width="13" height="13" viewBox="0 0 13 13"><rect x="0.6" y="0.6" width="11.8" height="11.8" fill="none" stroke="#666" stroke-width="1.2"/><path d="M4.6 0.5v12M8.4 0.5v12M0.5 4.6h12M0.5 8.4h12" stroke="#666" stroke-width="1.2"/></svg>
<svg class="a" style="left:574px;top:692px" width="16" height="16" viewBox="0 0 16 16"><rect x="1.5" y="1.5" width="13" height="12" fill="none" stroke="#666" stroke-width="1.2"/><rect x="4.5" y="3.6" width="7.2" height="8.3" fill="none" stroke="#666" stroke-width="1.1"/><path d="M6 5.6h4.2M6 7.6h4.2M6 9.6h4.2" stroke="#666" stroke-width="0.9"/></svg>
<svg class="a" style="left:612px;top:692px" width="16" height="16" viewBox="0 0 16 16"><rect x="1.5" y="1.5" width="13" height="12" fill="none" stroke="#666" stroke-width="1.2"/><path d="M1.6 8.3H9.6V1.6M5.5 1.6V8.3" fill="none" stroke="#666" stroke-width="1.1"/></svg>
<div class="a" style="left:644px;top:698.5px;width:6px;height:2px;background:#555"></div>
<div class="a" style="left:654px;top:699px;width:100px;height:1px;background:#999"></div>
<div class="a" style="left:702px;top:694px;width:4px;height:11px;background:#555"></div>
<div class="a" style="left:758px;top:699px;width:9px;height:2px;background:#555"></div>
<div class="a" style="left:761.5px;top:695.5px;width:2px;height:9px;background:#555"></div>
<div class="t" style="left:782.5px;top:694.5px;font-size:11.2px;color:#555">100%</div>
<!-- WATERMARK -->
<svg class="a" style="left:21px;top:636px" width="64" height="57" viewBox="0 0 64 57"><rect x="2" y="2" width="60" height="48" rx="5" fill="rgba(255,255,255,0.35)" stroke="rgba(170,170,170,0.7)" stroke-width="1.2"/><rect x="6" y="5" width="52" height="42" rx="4" fill="none" stroke="rgba(185,185,185,0.85)" stroke-width="3"/><path d="M30 32L11 13" stroke="rgba(160,160,160,0.8)" stroke-width="3"/><path d="M9 10l3 10 7-7z" fill="rgba(160,160,160,0.8)"/><path d="M14 37l-3 3 3 3M45 37l3 3-3 3" fill="none" stroke="rgba(210,210,210,0.8)" stroke-width="1.2"/><rect x="21" y="50" width="20" height="6" rx="2" fill="rgba(240,240,240,0.6)" stroke="rgba(180,180,180,0.7)" stroke-width="1"/></svg>
<svg class="a" style="left:86px;top:644px" width="185" height="40" viewBox="0 0 185 40"><text x="4" y="29" font-family="Liberation Sans" font-weight="bold" font-size="30" textLength="49" lengthAdjust="spacingAndGlyphs" fill="rgba(245,165,180,0.55)" stroke="rgba(230,130,150,0.6)" stroke-width="1.2">OS</text><text x="65" y="29" font-family="Liberation Sans" font-weight="bold" font-size="30" textLength="115" lengthAdjust="spacingAndGlyphs" fill="rgba(250,250,250,0.5)" stroke="rgba(170,170,170,0.75)" stroke-width="1.3">Helper</text></svg>
<div class="a" style="left:0;top:0;width:1px;height:712px;background:#217346"></div>
<div class="a" style="left:828px;top:0;width:1px;height:712px;background:#217346"></div>
<div class="a" style="left:0;top:711px;width:829px;height:1px;background:#217346"></div>
</body></html>
